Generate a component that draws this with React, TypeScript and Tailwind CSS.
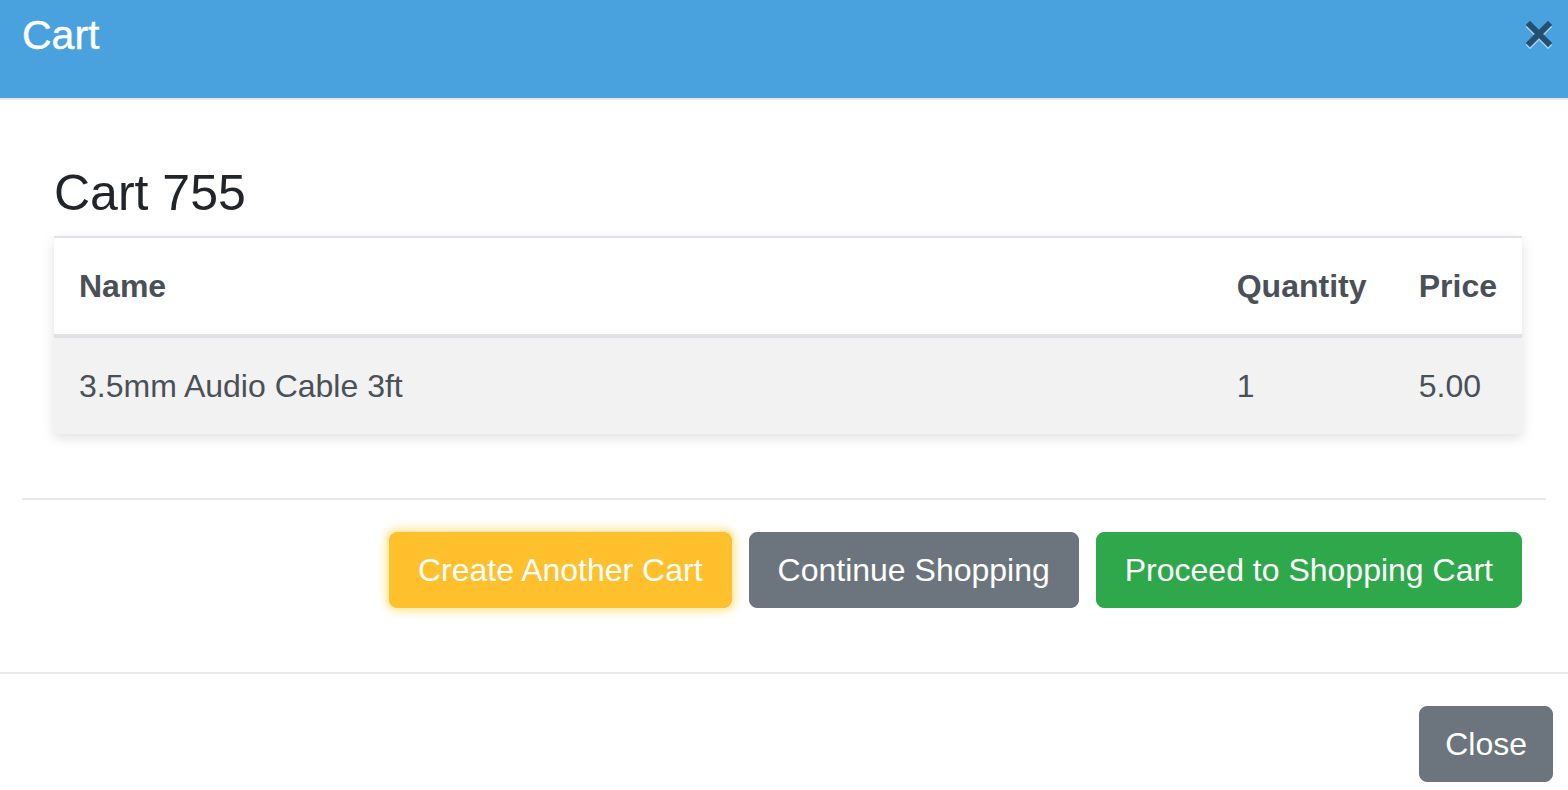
import React from 'react';

const items = [{ name: '3.5mm Audio Cable 3ft', qty: 1, price: '5.00' }];

const CloseIcon = () => (
  <svg width="28" height="30" viewBox="0 0 28 30" aria-hidden="true">
    <g strokeWidth="6" strokeLinecap="square">
      <path d="M5 7 L23 25 M23 7 L5 25" stroke="#a9d3ef" />
      <path d="M5 5 L23 23 M23 5 L5 23" stroke="#234f70" />
    </g>
  </svg>
);

export default function App() {
  return (
    <div className="min-h-[790px] w-full bg-white font-['Liberation_Sans',Arial,sans-serif] text-[#212529]">
      <header className="flex h-[100px] items-start justify-between border-b-2 border-[#e6e8ea] bg-[#49a2de] pl-[22px] pr-[15px] pt-[5px]">
        <h1 className="text-[41px] leading-[60px] font-medium text-white [-webkit-text-stroke:0.4px_white]">Cart</h1>
        <button className="mt-[15px]" aria-label="Close">
          <CloseIcon />
        </button>
      </header>

      <main className="px-[22px] pt-[64px] pb-[64px]">
        <div className="ml-[32px] mr-[24px]">
          <h3 className="mb-[14px] text-[50px] leading-[58px] font-normal">Cart 755</h3>
          <table className="w-full border-t-2 border-[#dee2e6] text-[32px] leading-[48px] text-[#495057] shadow-[0_4px_12px_rgba(0,0,0,0.12)]">
            <thead>
              <tr className="bg-white">
                <th className="border-b-4 border-[#dee2e6] px-[25px] py-[24px] text-left font-bold">Name</th>
                <th className="w-[182px] border-b-4 border-[#dee2e6] px-[25px] py-[24px] text-left font-bold">Quantity</th>
                <th className="w-[128px] border-b-4 border-[#dee2e6] px-[25px] py-[24px] text-left font-bold">Price</th>
              </tr>
            </thead>
            <tbody>
              {items.map((it, i) => (
                <tr key={i} className="bg-[#f2f2f2]">
                  <td className="px-[25px] py-[24px]">{it.name}</td>
                  <td className="px-[25px] py-[24px]">{it.qty}</td>
                  <td className="px-[25px] py-[24px]">{it.price}</td>
                </tr>
              ))}
            </tbody>
          </table>
        </div>

        <hr className="mt-[64px] border-t-2 border-[#e7e9eb]" />

        <div className="mr-[24px] mt-[32px] flex justify-end gap-[17px] text-[32px] leading-[48px] text-white">
          <button className="rounded-[8px] border border-[#ffc02e] bg-[#ffc02e] px-[28px] py-[13px] shadow-[0_0_10px_3px_rgba(255,193,7,0.45)]">
            Create Another Cart
          </button>
          <button className="rounded-[8px] border border-[#6c757d] bg-[#6c757d] px-[28px] py-[13px]">
            Continue Shopping
          </button>
          <button className="rounded-[8px] border border-[#2ea84a] bg-[#2ea84a] px-[28px] py-[13px]">
            Proceed to Shopping Cart
          </button>
        </div>
      </main>

      <footer className="flex justify-end border-t-2 border-[#e7e9eb] pr-[15px] pt-[32px]">
        <button className="rounded-[8px] border border-[#6c757d] bg-[#6c757d] px-[25px] py-[13px] text-[32px] leading-[48px] text-white">
          Close
        </button>
      </footer>
    </div>
  );
}
